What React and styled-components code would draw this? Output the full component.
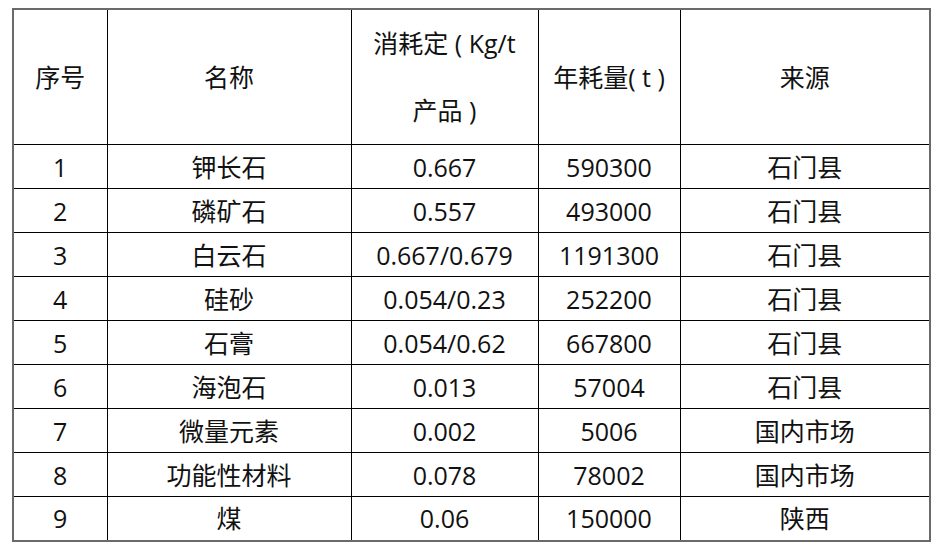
import React from "react";
import styled, { createGlobalStyle } from "styled-components";

const GlobalStyle = createGlobalStyle`
  html, body {
    margin: 0;
    padding: 0;
    background: #ffffff;
  }
  body {
    font-family: "Open Sans", "Noto Sans CJK SC", sans-serif;
    color: #111111;
  }
`;

const Page = styled.div`
  width: 941px;
  height: 551px;
  padding: 8px 0 0 12px;
  box-sizing: border-box;
`;

const Table = styled.table`
  border-collapse: collapse;
  table-layout: fixed;
  width: 917px;
  border: 2px solid #6a6a6a;
  font-size: 25px;
`;

const Col = styled.col`
  width: ${(p) => p.$w}px;
`;

const HeadRow = styled.tr`
  height: 135px;
`;

const Row = styled.tr`
  height: 44px;
`;

const HeadCell = styled.th`
  border: 1px solid #000;
  font-weight: normal;
  text-align: center;
  vertical-align: middle;
  padding: 0;
  line-height: ${(p) => (p.$tall ? "67px" : "30px")};
  white-space: nowrap;
`;

const Cell = styled.td`
  border: 1px solid #000;
  text-align: center;
  vertical-align: middle;
  padding: 0;
  line-height: 30px;
  white-space: nowrap;
`;

const widths = [94, 244, 187, 142, 250];

const rows = [
  ["1", "钾长石", "0.667", "590300", "石门县"],
  ["2", "磷矿石", "0.557", "493000", "石门县"],
  ["3", "白云石", "0.667/0.679", "1191300", "石门县"],
  ["4", "硅砂", "0.054/0.23", "252200", "石门县"],
  ["5", "石膏", "0.054/0.62", "667800", "石门县"],
  ["6", "海泡石", "0.013", "57004", "石门县"],
  ["7", "微量元素", "0.002", "5006", "国内市场"],
  ["8", "功能性材料", "0.078", "78002", "国内市场"],
  ["9", "煤", "0.06", "150000", "陕西"],
];

export default function App() {
  return (
    <Page>
      <GlobalStyle />
      <Table>
        <colgroup>
          {widths.map((w, i) => (
            <Col key={i} $w={w} />
          ))}
        </colgroup>
        <thead>
          <HeadRow>
            <HeadCell>序号</HeadCell>
            <HeadCell>名称</HeadCell>
            <HeadCell $tall>
              消耗定 ( Kg/t
              <br />
              产品 )
            </HeadCell>
            <HeadCell>年耗量( t )</HeadCell>
            <HeadCell>来源</HeadCell>
          </HeadRow>
        </thead>
        <tbody>
          {rows.map((r) => (
            <Row key={r[0]}>
              {r.map((c, i) => (
                <Cell key={i}>{c}</Cell>
              ))}
            </Row>
          ))}
        </tbody>
      </Table>
    </Page>
  );
}
